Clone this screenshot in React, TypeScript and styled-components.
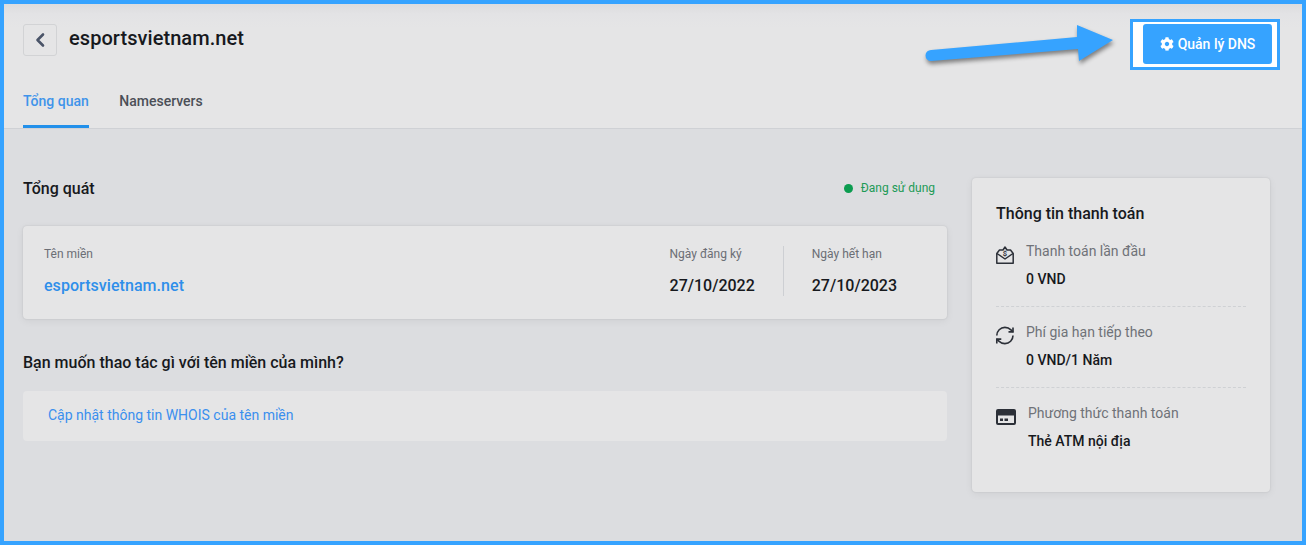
import React from "react";
import styled, { createGlobalStyle } from "styled-components";

const Global = createGlobalStyle`
  html, body { margin: 0; padding: 0; }
  body { font-family: Roboto, "Liberation Sans", sans-serif; background: #dcdde0; }
`;
const Frame = styled.div`
  position: relative; width: 1306px; height: 545px; box-sizing: border-box;
  border: 4px solid #36a3ff; background: #dcdde0; overflow: hidden;
`;
const Header = styled.header`
  height: 125px; box-sizing: border-box; background: linear-gradient(#dcdcde 0, #e3e3e5 10px, #e5e5e6 24px);
  border-bottom: 1px solid #cfd1d5;
  padding: 20px 19px 0; display: flex; flex-direction: column; justify-content: space-between;
`;
const TitleRow = styled.div`display: flex; align-items: center; gap: 12px;`;
const Back = styled.button`
  width: 34px; height: 32px; border: 1px solid #d2d3d5; border-radius: 3px; background: #e5e5e6;
  display: flex; align-items: center; justify-content: center; padding: 0; color: #4a5468;
`;
const Title = styled.h1`margin: 0; padding-bottom: 4px; font-size: 20px; font-weight: 500; letter-spacing: .06px; color: #17191d;`;
const Tabs = styled.nav`display: flex; gap: 30.5px;`;
const Tab = styled.div<{ $active?: boolean }>`
  height: 44px; box-sizing: border-box; padding-top: 9px; font-size: 14px; font-weight: 500;
  color: ${(p) => (p.$active ? "#3f94ea" : "#4b4f57")};
  border-bottom: 3px solid ${(p) => (p.$active ? "#2290ea" : "transparent")};
`;
const Body = styled.main`display: flex; gap: 25px; padding: 49px 19px 0;`;
const Left = styled.section`width: 924px;`;
const RowBetween = styled.div`display: flex; justify-content: space-between; align-items: center; height: 20px;`;
const H2 = styled.h2`margin: 0; font-size: 16px; font-weight: 500; color: #17191d;`;
const Status = styled.div`display: flex; align-items: center; gap: 8px; font-size: 12px; color: #1d9a57; padding-right: 12px;`;
const Dot = styled.span`width: 9px; height: 9px; border-radius: 50%; background: #0c9c50;`;
const Card = styled.div`
  margin-top: 28px; height: 93px; box-sizing: border-box; background: #e5e5e6; border-radius: 4px;
  box-shadow: 0 0 2px rgba(0,0,0,.12), 0 2px 8px rgba(0,0,0,.06); padding: 0 21px 3px; display: flex; align-items: center;
`;
const Col = styled.div<{ $grow?: boolean; $divide?: boolean }>`
  ${(p) => (p.$grow ? "flex: 1;" : "")}
  ${(p) => (p.$divide ? "border-left: 1px solid #cdcfd3; margin-left: 28px; padding-left: 28px; padding-right: 29px;" : "")}
`;
const Label = styled.div`font-size: 12px; color: #6b6e75; line-height: 16px;`;
const Domain = styled.div`font-size: 16px; font-weight: 500; letter-spacing: .05px; color: #2f8fea; line-height: 20px; margin-top: 14px;`;
const DateText = styled.div`font-size: 16px; font-weight: 500; color: #17191d; line-height: 20px; margin-top: 14px;`;
const Question = styled(H2)`margin-top: 34px; line-height: 20px;`;
const ActionBox = styled.div`
  margin-top: 18px; height: 50px; box-sizing: border-box; background: #e5e5e6; border-radius: 4px; display: flex; align-items: center;
  padding: 0 0 2px 25px; font-size: 14px; color: #3a8fee;
`;
const Side = styled.aside`
  width: 298px; height: 314px; box-sizing: border-box; background: #e5e5e6; border-radius: 4px;
  box-shadow: 0 0 2px rgba(0,0,0,.12), 0 2px 8px rgba(0,0,0,.06); padding: 26px 24px 0;
`;
const SideTitle = styled(H2)`line-height: 20px; margin-bottom: 18px;`;
const PayRow = styled.div<{ $line?: boolean }>`
  display: flex; gap: 12px; box-sizing: border-box;
  ${(p) => (p.$line ? "border-bottom: 1px dashed #cfd1d4; margin-bottom: 16px; height: 65px;" : "height: 60px;")}
`;
const IconBox = styled.div<{ $w: number; $top: number }>`
  width: ${(p) => p.$w}px; padding-top: ${(p) => p.$top}px; color: #2c3038; flex: none;
  svg { display: block; overflow: visible; }
`;
const PayLabel = styled.div`font-size: 14px; color: #6f7278; line-height: 18px;`;
const PayValue = styled.div`font-size: 14px; font-weight: 500; color: #17191d; line-height: 18px; margin-top: 10px;`;
const ArrowLayer = styled.svg`
  position: absolute; left: 920px; top: 18px; overflow: visible;
  filter: drop-shadow(1px 3px 2px rgba(0,0,0,.45));
`;
const DnsFrame = styled.div`
  position: absolute; left: 1126px; top: 15px; width: 150px; height: 51px; box-sizing: border-box;
  border: 3px solid #36a3ff; background: #fff; padding: 2px 5px 0 10px;
`;
const DnsButton = styled.div`
  height: 40px; background: #36a3ff; color: #fff; border-radius: 3px; font-size: 14px; font-weight: 500;
  display: flex; align-items: center; justify-content: center; gap: 4px;
`;

const Chevron = () => (
  <svg width="14" height="16" viewBox="0 0 14 16" fill="none" stroke="currentColor" strokeWidth="2.6" strokeLinecap="round" strokeLinejoin="round">
    <path d="M10 2.500 4.500 8l5.500 5.500" />
  </svg>
);
const Gear = () => (
  <svg width="14" height="14" viewBox="0 0 512 512" fill="#fff">
    <path d="M487.400 315.700l-42.600-24.600c4.300-23.200 4.300-47 0-70.200l42.600-24.600c4.900-2.800 7.100-8.600 5.500-14-11.100-35.600-30-67.800-54.700-94.600-3.800-4.100-10-5.100-14.800-2.300L380.800 110c-17.900-15.400-38.500-27.300-60.800-35.100V25.800c0-5.600-3.900-10.500-9.400-11.700-36.700-8.200-74.300-7.800-109.200 0-5.500 1.200-9.400 6.100-9.400 11.700V75c-22.200 7.900-42.800 19.800-60.800 35.100L88.700 85.500c-4.900-2.800-11-1.900-14.800 2.300-24.700 26.700-43.600 58.900-54.700 94.600-1.700 5.400.6 11.200 5.500 14L67.300 221c-4.300 23.200-4.300 47 0 70.200l-42.600 24.600c-4.900 2.800-7.100 8.600-5.500 14 11.100 35.600 30 67.800 54.700 94.600 3.800 4.100 10 5.100 14.800 2.300l42.600-24.600c17.900 15.400 38.500 27.300 60.800 35.100v49.200c0 5.600 3.900 10.500 9.400 11.700 36.700 8.200 74.300 7.800 109.200 0 5.500-1.200 9.400-6.100 9.400-11.700v-49.200c22.200-7.900 42.800-19.800 60.800-35.100l42.600 24.600c4.900 2.800 11 1.900 14.800-2.300 24.700-26.700 43.600-58.900 54.700-94.600 1.500-5.500-.7-11.300-5.600-14.100zM256 336c-44.100 0-80-35.900-80-80s35.900-80 80-80 80 35.900 80 80-35.900 80-80 80z" />
  </svg>
);
const Envelope = () => (
  <svg width="18" height="18" viewBox="0 0 18 18" fill="none" stroke="currentColor" strokeWidth="1.500" strokeLinejoin="round">
    <path d="M.8 7.500 3.500 4H7L9 1l2 3h3.500l2.700 3.500v9.700H.8Z" />
    <path d="M1 7.500 9 13l8-5.500" />
    <text x="9" y="10" fontSize="7.500" fontWeight="700" textAnchor="middle" fill="currentColor" stroke="none" fontFamily="Roboto, sans-serif">$</text>
  </svg>
);
const Sync = () => (
  <svg width="18" height="18" viewBox="0 0 18 18" fill="none" stroke="currentColor" strokeWidth="1.800">
    <g transform="translate(-1.900 -1.300) scale(.9)">
      <path d="M3 12a9 9 0 0 1 9-9 9.750 9.750 0 0 1 6.740 2.740L21 8" />
      <path d="M21 3v5h-5" />
      <path d="M21 12a9 9 0 0 1-9 9 9.750 9.750 0 0 1-6.740-2.740L3 16" />
      <path d="M8 16H3v5" />
    </g>
  </svg>
);
const CardIcon = () => (
  <svg width="20" height="16" viewBox="0 0 20 16" fill="currentColor">
    <path fillRule="evenodd" d="M2 0h16a2 2 0 0 1 2 2v12a2 2 0 0 1-2 2H2a2 2 0 0 1-2-2V2a2 2 0 0 1 2-2Zm0 6.500V14h16V6.500H2Zm2 3h3V12H4V9.500Zm4.500 0H12V12H8.500V9.500Z" />
  </svg>
);

export default function App() {
  return (
    <Frame>
      <Global />
      <Header>
        <TitleRow>
          <Back><Chevron /></Back>
          <Title>esportsvietnam.net</Title>
        </TitleRow>
        <Tabs>
          <Tab $active>Tổng quan</Tab>
          <Tab>Nameservers</Tab>
        </Tabs>
      </Header>
      <Body>
        <Left>
          <RowBetween>
            <H2>Tổng quát</H2>
            <Status><Dot />Đang sử dụng</Status>
          </RowBetween>
          <Card>
            <Col $grow>
              <Label>Tên miền</Label>
              <Domain>esportsvietnam.net</Domain>
            </Col>
            <Col>
              <Label>Ngày đăng ký</Label>
              <DateText>27/10/2022</DateText>
            </Col>
            <Col $divide>
              <Label>Ngày hết hạn</Label>
              <DateText>27/10/2023</DateText>
            </Col>
          </Card>
          <Question>Bạn muốn thao tác gì với tên miền của mình?</Question>
          <ActionBox>Cập nhật thông tin WHOIS của tên miền</ActionBox>
        </Left>
        <Side>
          <SideTitle>Thông tin thanh toán</SideTitle>
          <PayRow $line>
            <IconBox $w={18} $top={4}><Envelope /></IconBox>
            <div><PayLabel>Thanh toán lần đầu</PayLabel><PayValue>0 VND</PayValue></div>
          </PayRow>
          <PayRow $line>
            <IconBox $w={18} $top={3}><Sync /></IconBox>
            <div><PayLabel>Phí gia hạn tiếp theo</PayLabel><PayValue>0 VND/1 Năm</PayValue></div>
          </PayRow>
          <PayRow>
            <IconBox $w={20} $top={5}><CardIcon /></IconBox>
            <div><PayLabel>Phương thức thanh toán</PayLabel><PayValue>Thẻ ATM nội địa</PayValue></div>
          </PayRow>
        </Side>
      </Body>
      <ArrowLayer width="200" height="50" viewBox="0 0 200 50">
        <path d="M153 3 189 18 155 39 154 27 7 39A5.500 5.500 0 0 1 7 28L153 15Z" fill="#36a3ff" />
      </ArrowLayer>
      <DnsFrame>
        <DnsButton><Gear />Quản lý DNS</DnsButton>
      </DnsFrame>
    </Frame>
  );
}
